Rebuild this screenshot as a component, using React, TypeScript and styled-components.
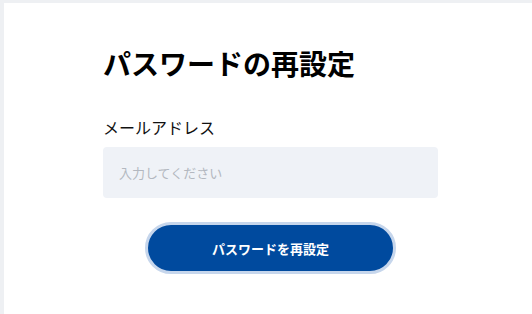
import styled, { createGlobalStyle } from "styled-components"

const Global = createGlobalStyle`
  html, body {
    margin: 0;
    padding: 0;
    background: #eef0f3;
    font-family: "Noto Sans CJK JP", "Noto Sans", sans-serif;
  }
`

const App = () => {
  return (
    <>
      <Global />
      <Page>
        <Card>
          <Form>
            <Title>パスワードの再設定</Title>
            <Label htmlFor="email">メールアドレス</Label>
            <Input id="email" placeholder="入力してください" />
            <ButtonRow>
              <Button>パスワードを再設定</Button>
            </ButtonRow>
          </Form>
        </Card>
      </Page>
    </>
  )
}
export default App

const Page = styled.div`
  width: 532px;
  height: 314px;
  overflow: hidden;
  padding: 3px 0 0 4px;
  box-sizing: border-box;
`
const Card = styled.div`
  background: #ffffff;
  height: 340px;
  margin-right: -20px;
  padding: 40px 0 0 99px;
  box-sizing: border-box;
`
const Form = styled.div`
  width: 335px;
  display: flex;
  flex-direction: column;
`
const Title = styled.h1`
  margin: 0 0 32px;
  font-size: 28px;
  font-weight: 700;
  line-height: 40px;
  color: #000000;
`
const Label = styled.label`
  font-size: 16px;
  line-height: 24px;
  color: #111111;
  margin-bottom: 8px;
`
const Input = styled.input`
  height: 51px;
  border: none;
  border-radius: 4px;
  background: #eff2f7;
  padding: 0 16px;
  font-size: 13px;
  font-family: inherit;
  outline: none;
  box-sizing: border-box;
  &::placeholder {
    color: #b3b8c0;
  }
`
const ButtonRow = styled.div`
  display: flex;
  justify-content: center;
  margin-top: 24px;
`
const Button = styled.button`
  width: 251px;
  height: 52px;
  border-radius: 26px;
  border: 3px solid #c6d6ec;
  background: #004a9e;
  color: #ffffff;
  font-family: inherit;
  font-size: 13px;
  font-weight: 700;
  cursor: pointer;
  box-sizing: border-box;
`
